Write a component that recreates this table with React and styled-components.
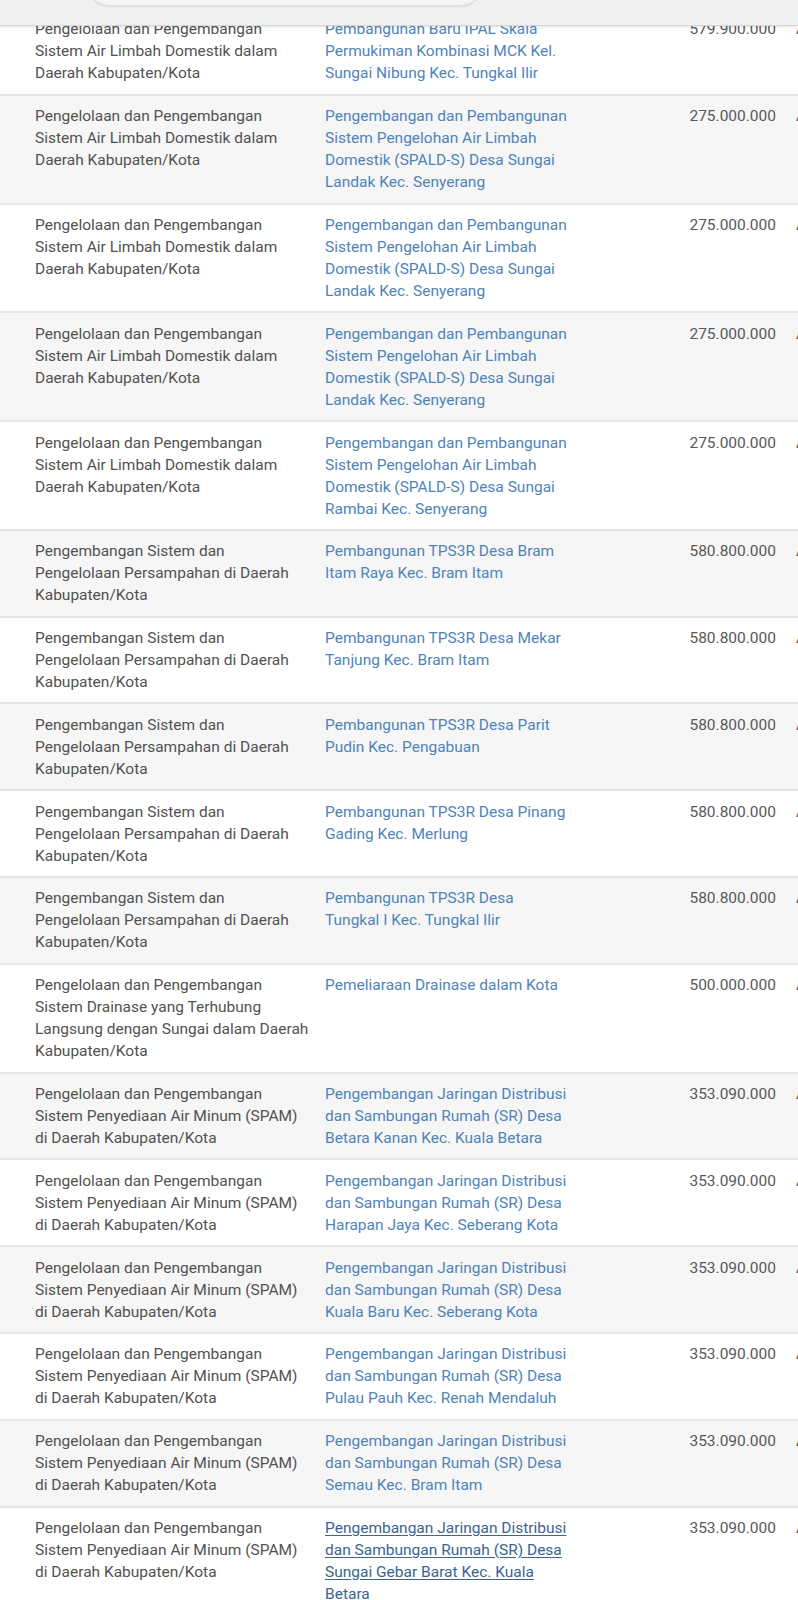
import React from "react";
import styled, { createGlobalStyle } from "styled-components";

const GlobalStyle = createGlobalStyle`
  html, body {
    margin: 0;
    padding: 0;
    background: #ffffff;
    overflow-x: hidden;
  }
  body {
    font-family: Roboto, "Noto Sans", "Liberation Sans", sans-serif;
  }
`;

const TopBar = styled.div`
  position: fixed;
  top: 0;
  left: 0;
  right: 0;
  height: 25px;
  background: #f0f0f0;
  border-bottom: 1px solid #d6d6d6;
  box-shadow: 0 1px 3px rgba(0, 0, 0, 0.12);
  z-index: 10;
  overflow: hidden;
`;

const SearchPill = styled.div`
  margin-left: 88px;
  margin-top: -36px;
  width: 392px;
  height: 40px;
  border-radius: 22px;
  background: #f5f5f5;
  border: 1px solid #dcdcdc;
  box-shadow: 0 1px 2px rgba(0, 0, 0, 0.08);
`;

const Page = styled.div`
  padding-top: 9px;
  width: 1000px;
`;

const Table = styled.table`
  border-collapse: collapse;
  table-layout: fixed;
  width: 1000px;
  font-size: 15.5px;
  line-height: 22px;
`;

const Row = styled.tr`
  background: ${(p) => (p.$striped ? "#f6f6f6" : "#ffffff")};
  border-bottom: 2px solid #e6e6e6;
`;

const Cell = styled.td`
  vertical-align: top;
  padding: 9.4px 10px 9.4px 10px;
  color: #525252;
`;

const FirstCell = styled(Cell)`
  padding-left: 35px;
  padding-right: 4px;
`;

const AmountCell = styled(Cell)`
  text-align: right;
  color: #585858;
`;

const Link = styled.a`
  color: ${(p) => (p.$active ? "#3a6590" : "#4f84b9")};
  text-decoration: ${(p) => (p.$active ? "underline" : "none")};
  text-underline-offset: 2px;
  cursor: pointer;
`;

const SAL = "Pengelolaan dan Pengembangan Sistem Air Limbah Domestik dalam Daerah Kabupaten/Kota";
const SAMPAH = "Pengembangan Sistem dan Pengelolaan Persampahan di Daerah Kabupaten/Kota";
const SPAM = "Pengelolaan dan Pengembangan Sistem Penyediaan Air Minum (SPAM) di Daerah Kabupaten/Kota";

const rows = [
  [SAL, "Pembangunan Baru IPAL Skala Permukiman Kombinasi MCK Kel. Sungai Nibung Kec. Tungkal Ilir", "579.900.000"],
  [SAL, "Pengembangan dan Pembangunan Sistem Pengelohan Air Limbah Domestik (SPALD-S) Desa Sungai Landak Kec. Senyerang", "275.000.000"],
  [SAL, "Pengembangan dan Pembangunan Sistem Pengelohan Air Limbah Domestik (SPALD-S) Desa Sungai Landak Kec. Senyerang", "275.000.000"],
  [SAL, "Pengembangan dan Pembangunan Sistem Pengelohan Air Limbah Domestik (SPALD-S) Desa Sungai Landak Kec. Senyerang", "275.000.000"],
  [SAL, "Pengembangan dan Pembangunan Sistem Pengelohan Air Limbah Domestik (SPALD-S) Desa Sungai Rambai Kec. Senyerang", "275.000.000"],
  [SAMPAH, "Pembangunan TPS3R Desa Bram Itam Raya Kec. Bram Itam", "580.800.000"],
  [SAMPAH, "Pembangunan TPS3R Desa Mekar Tanjung Kec. Bram Itam", "580.800.000"],
  [SAMPAH, "Pembangunan TPS3R Desa Parit Pudin Kec. Pengabuan", "580.800.000"],
  [SAMPAH, "Pembangunan TPS3R Desa Pinang Gading Kec. Merlung", "580.800.000"],
  [SAMPAH, "Pembangunan TPS3R Desa Tungkal I Kec. Tungkal Ilir", "580.800.000"],
  ["Pengelolaan dan Pengembangan Sistem Drainase yang Terhubung Langsung dengan Sungai dalam Daerah Kabupaten/Kota", "Pemeliaraan Drainase dalam Kota", "500.000.000"],
  [SPAM, "Pengembangan Jaringan Distribusi dan Sambungan Rumah (SR) Desa Betara Kanan Kec. Kuala Betara", "353.090.000"],
  [SPAM, "Pengembangan Jaringan Distribusi dan Sambungan Rumah (SR) Desa Harapan Jaya Kec. Seberang Kota", "353.090.000"],
  [SPAM, "Pengembangan Jaringan Distribusi dan Sambungan Rumah (SR) Desa Kuala Baru Kec. Seberang Kota", "353.090.000"],
  [SPAM, "Pengembangan Jaringan Distribusi dan Sambungan Rumah (SR) Desa Pulau Pauh Kec. Renah Mendaluh", "353.090.000"],
  [SPAM, "Pengembangan Jaringan Distribusi dan Sambungan Rumah (SR) Desa Semau Kec. Bram Itam", "353.090.000"],
  [SPAM, "Pengembangan Jaringan Distribusi dan Sambungan Rumah (SR) Desa Sungai Gebar Barat Kec. Kuala Betara", "353.090.000"],
];

export default function App() {
  return (
    <>
      <GlobalStyle />
      <TopBar>
        <SearchPill />
      </TopBar>
      <Page>
        <Table>
          <colgroup>
            <col style={{ width: 315 }} />
            <col style={{ width: 265 }} />
            <col style={{ width: 206 }} />
            <col style={{ width: 214 }} />
          </colgroup>
          <tbody>
            {rows.map(([program, kegiatan, pagu], i) => (
              <Row key={i} $striped={i % 2 === 1}>
                <FirstCell>{program}</FirstCell>
                <Cell>
                  <Link $active={i === rows.length - 1}>{kegiatan}</Link>
                </Cell>
                <AmountCell>{pagu}</AmountCell>
                <Cell>APBD</Cell>
              </Row>
            ))}
          </tbody>
        </Table>
      </Page>
    </>
  );
}
